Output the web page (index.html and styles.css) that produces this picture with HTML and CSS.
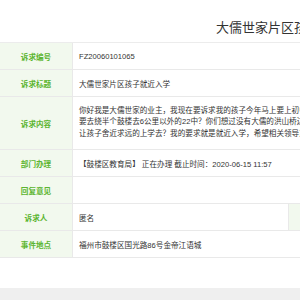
FILE: index.html
```html
<!DOCTYPE html>
<html lang="zh-CN">
<head>
<meta charset="utf-8">
<title>诉求详情</title>
<link rel="stylesheet" href="styles.css">
</head>
<body>
<div class="page">
  <h1 class="title">大儒世家片区孩子就近入学</h1>
  <div class="table">
    <div class="row">
      <div class="label">诉求编号</div>
      <div class="value">FZ20060101065</div>
    </div>
    <div class="row">
      <div class="label">诉求标题</div>
      <div class="value">大儒世家片区孩子就近入学</div>
    </div>
    <div class="row row-tall">
      <div class="label">诉求内容</div>
      <div class="value value-multi">你好我是大儒世家的业主，我现在要诉求我的孩子今年马上要上初中了，按照现在的划片<br>要去绕半个鼓楼去6公里以外的22中？你们想过没有大儒的洪山桥边就有学校，为什么要<br>让孩子舍近求远的上学去？我的要求就是就近入学，希望相关领导重视。</div>
    </div>
    <div class="row">
      <div class="label">部门办理</div>
      <div class="value">【鼓楼区教育局】 正在办理 截止时间：2020-06-15 11:57</div>
    </div>
    <div class="row">
      <div class="label">回复意见</div>
      <div class="value"></div>
    </div>
    <div class="row">
      <div class="label">诉求人</div>
      <div class="value value-half">匿名</div>
      <div class="label">联系电话</div>
      <div class="value"></div>
    </div>
    <div class="row">
      <div class="label">事件地点</div>
      <div class="value">福州市鼓楼区国光路86号金帝江语城</div>
    </div>
  </div>
</div>
<div class="footer"></div>
</body>
</html>
```
FILE: styles.css
```css
html, body {
  margin: 0;
  padding: 0;
  background: #ffffff;
}
body {
  width: 300px;
  overflow: hidden;
  font-family: "Liberation Sans", "Noto Sans CJK SC", sans-serif;
  color: #333333;
}
.page {
  width: 588px;
  padding-bottom: 30px;
}
.title {
  margin: 0;
  height: 42px;
  box-sizing: border-box;
  padding-top: 20px;
  text-align: center;
  font-size: 13px;
  line-height: 16px;
  font-weight: normal;
  color: #333333;
  white-space: nowrap;
}
.table {
  border-top: 1px solid #ececec;
}
.row {
  display: flex;
  height: 27px;
  box-sizing: border-box;
  border-bottom: 1px solid #e9e9e9;
}
.row-tall {
  height: 53px;
}
.label {
  flex: 0 0 73px;
  display: flex;
  align-items: center;
  justify-content: center;
  background: #f2f9ee;
  color: #5cb530;
  font-weight: bold;
  font-size: 7.6px;
  border-right: 1px solid #e9e9e9;
  box-sizing: border-box;
  white-space: nowrap;
}
.value {
  flex: 1;
  display: flex;
  align-items: center;
  padding-left: 6px;
  font-size: 7.6px;
  white-space: nowrap;
}
.value-half {
  flex: 0 0 216px;
  box-sizing: border-box;
  border-right: 1px solid #e9e9e9;
}
.value-multi {
  display: block;
  padding-top: 8px;
  line-height: 11.3px;
}
.footer {
  height: 20px;
  background: #efefef;
}
```
